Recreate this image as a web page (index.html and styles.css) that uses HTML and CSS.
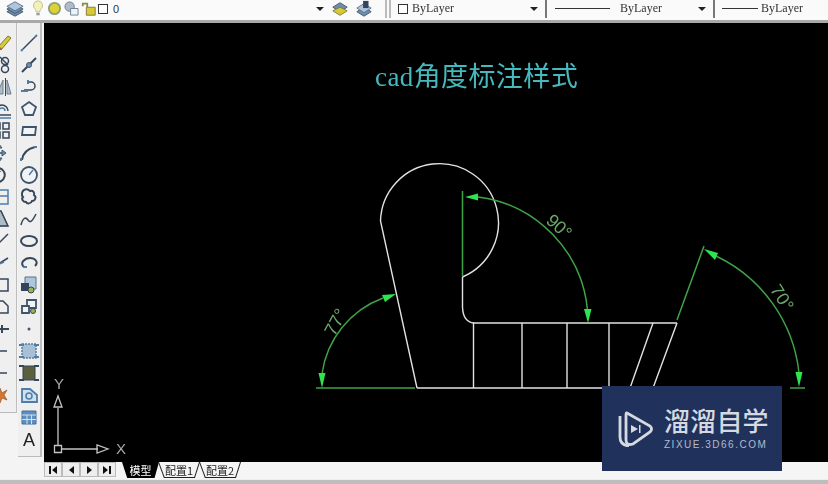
FILE: index.html
```html
<!DOCTYPE html>
<html lang="zh">
<head>
<meta charset="utf-8">
<title>cad角度标注样式</title>
<link rel="stylesheet" href="styles.css">
</head>
<body>
<div class="app">
  <header class="topbar">
    <svg class="tool layers" viewBox="0 0 24 20"><path class="fb" d="M3 13l9 5 9-5-9-5z"/><path class="fb" d="M3 10l9 5 9-5-9-5z"/><path class="fl" d="M3 7l9 5 9-5-9-5z"/></svg>
    <svg class="tool bulb" viewBox="0 0 14 20"><path class="bulbp" d="M7 1a5.500 5.500 0 0 0-3 10l1 3h4l1-3a5.500 5.500 0 0 0-3-10z"/><path class="bulbb" d="M5 15h4v3H5z"/></svg>
    <svg class="tool sun" viewBox="0 0 16 16"><circle class="sunp" cx="8" cy="8" r="6"/></svg>
    <svg class="tool frz" viewBox="0 0 16 16"><circle class="fg" cx="6" cy="6" r="5"/><path class="fw" d="M7 8h8v7H7z"/></svg>
    <svg class="tool lock" viewBox="0 0 18 18"><path class="lk" d="M2 6V3h5v4"/><path class="ly" d="M6 7h10v9H6z"/></svg>
    <span class="swatch"></span>
    <span class="layername">0</span>
    <span class="caret first"></span>
    <svg class="tool lay2" viewBox="0 0 22 20"><path class="fb" d="M3 8l8-5 8 5-8 5z"/><path class="ly" d="M3 12l8-4 8 4-8 5z"/></svg>
    <svg class="tool lay3" viewBox="0 0 22 20"><path class="fb" d="M3 13l8 5 8-5-8-5z"/><path class="fl" d="M3 9l8 5 8-5-8-5z"/><path class="fd" d="M10 1h6v8h-6z"/></svg>
    <span class="grip"></span>
    <span class="swatch second"></span>
    <span class="bylayer one">ByLayer</span>
    <span class="caret c2"></span>
    <span class="sep s1"></span>
    <span class="stroke long"></span>
    <span class="bylayer">ByLayer</span>
    <span class="caret c3"></span>
    <span class="sep s2"></span>
    <span class="stroke short"></span>
    <span class="bylayer">ByLayer</span>
  </header>

  <aside class="side">
    <div class="col narrow">
      <svg class="ic" viewBox="0 0 22 22"><path class="ly" d="M4 15L14 4l3 2L7 18z"/><path class="red" d="M2 19l3-5 3 3z"/></svg>
      <svg class="ic" viewBox="0 0 22 22"><circle class="s" cx="11" cy="7" r="3.500"/><circle class="s" cx="11" cy="15" r="3.500"/><path class="s" d="M6 3l8 8"/></svg>
      <svg class="ic" viewBox="0 0 22 22"><path class="fg" d="M9 4v14H3z"/><path class="fd" d="M11 2v18h1V2z"/><path class="fg" d="M13 4v14h4z"/></svg>
      <svg class="ic" viewBox="0 0 22 22"><path class="s" d="M2 13a6 6 0 0 1 12 0"/><path class="s" d="M0 17h17"/><path class="sb" d="M0 20h17M5 13a3 3 0 0 1 6 0"/></svg>
      <svg class="ic" viewBox="0 0 22 22"><path class="s" d="M0 3h6v6H0zM9 3h6v6H9zM0 12h6v6H0zM9 12h6v6H9z"/></svg>
      <svg class="ic" viewBox="0 0 22 22"><path class="sb thick" d="M5 4v14M-1 11h12"/><path class="fb" d="M5 2l3 4H2zM5 20l3-4H2zM12 11l-4 3V8z"/></svg>
      <svg class="ic" viewBox="0 0 22 22"><path class="s thick" d="M4 4a7 7 0 1 1-6 3"/><path class="fd" d="M2 1v7h5z"/></svg>
      <svg class="ic" viewBox="0 0 22 22"><path class="sb" d="M-2 4h16v14H-2z"/><path class="sb" d="M4 18v-8h10"/></svg>
      <svg class="ic" viewBox="0 0 22 22"><path class="fg" d="M2 3h5l7 15H-4z"/><path class="s" d="M2 3l-6 15h18L7 3z"/></svg>
      <svg class="ic" viewBox="0 0 22 22"><path class="s" d="M-3 13h8l9-9"/><path class="s" d="M2 9v7"/></svg>
      <svg class="ic" viewBox="0 0 22 22"><path class="s" d="M-2 16L14 6"/><path class="sb" d="M5 12l5-2"/></svg>
      <svg class="ic" viewBox="0 0 22 22"><path class="s" d="M-3 5h17v12H-3z"/></svg>
      <svg class="ic" viewBox="0 0 22 22"><path class="s" d="M-3 5h12l5 5v7H-3z"/></svg>
      <svg class="ic" viewBox="0 0 22 22"><path class="s thick" d="M-3 11h18M3 7v8M8 7v8"/></svg>
      <svg class="ic" viewBox="0 0 22 22"><path class="s" d="M-2 14l4-3h11"/><path class="sb" d="M2 16l1-5"/></svg>
      <svg class="ic" viewBox="0 0 22 22"><path class="s" d="M-2 16q2-5 6-5h9"/></svg>
      <svg class="ic" viewBox="0 0 22 22"><path class="org" d="M6 4l2 5 5-3-3 5 3 5-5-2-2 5-2-5-4-1 3-4z"/></svg>
    </div>
    <div class="col wide">
      <svg class="ic" viewBox="0 0 22 22"><path class="s" d="M5 17L17 5"/><path class="sb thick" d="M3 19l2-2M17 5l2-2"/></svg>
      <svg class="ic" viewBox="0 0 22 22"><path class="s thick" d="M4 18L18 4"/><circle class="fb" cx="11" cy="11" r="2.500"/></svg>
      <svg class="ic" viewBox="0 0 22 22"><path class="s" d="M9 6h4a4 4 0 0 1 0 8H6"/><path class="sb thick" d="M3 15h7M10 4v4"/></svg>
      <svg class="ic" viewBox="0 0 22 22"><path class="pent" d="M11 4l7 5-3 8H7L4 9z"/></svg>
      <svg class="ic" viewBox="0 0 22 22"><path class="pent" d="M5 7h13l-1 8H4z"/></svg>
      <svg class="ic" viewBox="0 0 22 22"><path class="s thick" d="M4 18q1-10 13-13"/><path class="sb thick" d="M3 19v-3M16 5h3"/></svg>
      <svg class="ic" viewBox="0 0 22 22"><circle class="pent" cx="11" cy="11" r="8"/><path class="sb" d="M11 11l4-5"/></svg>
      <svg class="ic" viewBox="0 0 22 22"><path class="s thick" d="M6 4c3-2 5 0 6 1 3-1 5 2 4 4 3 2 1 6-2 6-1 3-5 3-6 1-3 0-5-3-3-5-2-2-1-6 1-7z"/></svg>
      <svg class="ic" viewBox="0 0 22 22"><path class="s" d="M3 17c2-8 5-8 7-5s4 2 8-6"/></svg>
      <svg class="ic" viewBox="0 0 22 22"><ellipse class="s thick" cx="11" cy="11" rx="8" ry="5"/></svg>
      <svg class="ic" viewBox="0 0 22 22"><path class="s thick" d="M6 15C1 11 7 6 12 6s9 4 5 8"/><path class="sb thick" d="M5 15h4"/></svg>
      <svg class="ic" viewBox="0 0 22 22"><path class="fl" d="M7 3h11v12H7z"/><path class="fd" d="M3 9h8v8H3z"/><circle class="fgn" cx="13" cy="16" r="3"/></svg>
      <svg class="ic" viewBox="0 0 22 22"><path class="pent" d="M9 4h9v8H9z"/><path class="pent" d="M4 10h7v7H4z"/><circle class="fgn" cx="15" cy="15" r="2.500"/></svg>
      <svg class="ic" viewBox="0 0 22 22"><circle class="dot" cx="11" cy="11" r="1.500"/></svg>
      <svg class="ic" viewBox="0 0 22 22"><path class="hatch" d="M4 4h14v14H4z"/><path class="sb thick" d="M1 5h5M16 5h5M1 17h5M16 17h5"/></svg>
      <svg class="ic" viewBox="0 0 22 22"><path class="grad" d="M5 4h12v14H5z"/><path class="s thick" d="M1 4h5M16 4h5M1 18h5M16 18h5"/></svg>
      <svg class="ic" viewBox="0 0 22 22"><path class="region" d="M4 5h8l7 6v7H4z"/><circle class="sb" cx="11" cy="12" r="3"/></svg>
      <svg class="ic" viewBox="0 0 22 22"><path class="table" d="M4 5h14v13H4z"/><path class="tl" d="M4 9h14M4 13.500h14M9 9v9M13.500 9v9"/></svg>
      <span class="ic letter">A</span>
    </div>
  </aside>

  <main class="canvas">
    <svg class="drawing" viewBox="44 23 784 439">
      <text class="title" x="375" y="86">cad角度标注样式</text>
      <g class="white">
        <path d="M462.500 277A59 59 0 1 0 380.500 221L417 388"/>
        <path d="M462.500 277V307Q463 322 474 323"/>
        <path d="M473 323H677M417 388H610"/>
        <path d="M473.500 323V388M522 323V388M567 323V388M609 323V388"/>
        <path d="M653 323L630 388M677 323L653 388"/>
      </g>
      <g class="green">
        <path d="M316 388H415M462.500 191V276M790 388H805M677 320L704 246"/>
        <path d="M478 197A126 126 0 0 1 587.500 310"/>
        <path d="M322 374A95 95 0 0 1 383 298"/>
        <path d="M716 256A147 147 0 0 1 799 373"/>
      </g>
      <g class="arrow">
        <path d="M465 197L478 193.500V200.500z"/>
        <path d="M588 323L584 309H591.500z"/>
        <path d="M322 388L318.500 373H325.500z"/>
        <path d="M396 294L382 295L385 302z"/>
        <path d="M704 249L718 253L715 260z"/>
        <path d="M799 387L795.500 372H802.500z"/>
      </g>
      <text class="dim" transform="translate(555 231) rotate(42)" text-anchor="middle">90°</text>
      <text class="dim" transform="translate(777 301) rotate(57)" text-anchor="middle">70°</text>
      <text class="dim" transform="translate(341 325) rotate(-62)" text-anchor="middle">77°</text>
      <g class="ucs">
        <path d="M54.500 445.500h7v7h-7zM58 445V408M62 449H98"/>
        <path d="M58 396l4 11h-8zM108 449l-11 4v-8z"/>
      </g>
      <text class="axis" x="59" y="389" text-anchor="middle">Y</text>
      <text class="axis" x="121" y="454" text-anchor="middle">X</text>
    </svg>
  </main>

  <nav class="tabsbar">
    <div class="navs">
      <span class="nav"><i class="bar"></i><i class="tl-arrow"></i></span>
      <span class="nav"><i class="tl-arrow"></i></span>
      <span class="nav"><i class="tr-arrow"></i></span>
      <span class="nav"><i class="tr-arrow"></i><i class="bar"></i></span>
    </div>
    <span class="tab active">模型</span>
    <span class="tab">配置1</span>
    <span class="tab">配置2</span>
  </nav>
  <div class="status"></div>

  <aside class="mark">
    <svg class="marklogo" viewBox="0 0 36 36">
      <path d="M3 5V26Q3 34 12 35"/>
      <path d="M10 2L33 15Q36 18 33 21L16 33Q9 35 9 29V5Q9 1 10 2z"/>
      <path class="solid" d="M14 14l7 4-7 4z"/>
      <path class="solid" d="M22 14h1.500v8H22z"/>
    </svg>
    <div class="marktext">
      <span class="markcn">溜溜自学</span>
      <span class="marken">ZIXUE.3D66.COM</span>
    </div>
  </aside>
</div>
</body>
</html>
```
FILE: styles.css
```css
* { box-sizing: border-box; }
html, body { margin: 0; padding: 0; }
body { width: 828px; height: 484px; overflow: hidden; background: #f3f3f3; font-family: "Liberation Sans", sans-serif; }

.app {
  position: relative;
  width: 828px;
  height: 484px;
  display: grid;
  grid-template-columns: 44px 1fr;
  grid-template-rows: 23px 439px 17px 5px;
  overflow: hidden;
}

/* top toolbar */
.topbar {
  grid-column: 1 / 3;
  display: flex;
  align-items: center;
  height: 23px;
  padding-bottom: 3px;
  background: #fafafa;
  border-bottom: 3px solid #a9a9a9;
  color: #333;
  font-family: "Liberation Serif", serif;
  font-size: 12px;
  filter: blur(.5px);
}
.tool { flex: none; display: block; }
.layers { width: 22px; height: 18px; margin-left: 4px; }
.bulb { width: 12px; height: 17px; margin-left: 6px; }
.sun { width: 15px; height: 15px; margin-left: 3px; }
.frz { width: 15px; height: 15px; margin-left: 2px; }
.lock { width: 16px; height: 16px; margin-left: 2px; }
.swatch { flex: none; width: 10px; height: 10px; border: 1.500px solid #333; background: #fff; margin-left: 1px; }
.layername { margin-left: 5px; width: 203px; font-family: "Liberation Sans", sans-serif; font-size: 11px; }
.caret { flex: none; width: 0; height: 0; border: 4px solid transparent; border-top: 4px solid #222; border-bottom: 0; }
.caret.first { margin-left: 0; }
.lay2 { width: 20px; height: 18px; margin-left: 6px; }
.lay3 { width: 20px; height: 18px; margin-left: 4px; }
.grip { flex: none; width: 6px; height: 19px; margin-left: 11px; border-left: 2px solid #bbb; border-right: 2px solid #bbb; }
.swatch.second { margin-left: 7px; }
.bylayer { flex: none; width: 42px; font-size: 12px; }
.bylayer.one { margin-left: 4px; }
.c2 { margin-left: 76px; }
.sep { flex: none; width: 2px; height: 19px; background: #777; }
.s1 { margin-left: 7px; }
.stroke { flex: none; height: 1px; background: #333; }
.long { width: 55px; margin: 0 10px 0 8px; }
.c3 { margin-left: 36px; }
.s2 { margin-left: 7px; }
.short { width: 36px; margin: 0 3px 0 7px; }

/* svg tool paints */
.fb { fill: #6e8eb0; stroke: #44566b; stroke-width: 1; }
.fl { fill: #aec6dc; stroke: #5b7188; stroke-width: 1; }
.fd { fill: #33455c; }
.fg { fill: #aebcc8; stroke: #6d8091; stroke-width: 1; }
.fw { fill: #eef2f5; stroke: #6d8091; stroke-width: 1; }
.ly { fill: #d8c93a; stroke: #7a7a30; stroke-width: 1; }
.lk { fill: none; stroke: #8d8a50; stroke-width: 2; }
.bulbp { fill: #f4f1b6; stroke: #b9b98a; stroke-width: 1; }
.bulbb { fill: #9aa0a0; }
.sunp { fill: #dcd238; stroke: #8fa07a; stroke-width: 2; }

/* left toolbars */
.side {
  display: flex;
  align-items: flex-start;
  gap: 2px;
  overflow: hidden;
  background: #f4f4f4;
  grid-row: 2 / 4;
  filter: blur(.5px);
}
.col {
  flex: none;
  display: flex;
  flex-direction: column;
  align-items: center;
  padding-top: 9px;
  width: 22px;
  background: #efefef;
}
.narrow { margin-left: -6px; height: 390px; border-bottom: 1px solid #bbb; box-shadow: 1px 0 0 #bdbdbd; }
.wide { height: 434px; border-bottom: 1px solid #bbb; box-shadow: 2px 0 0 #bdbdbd; }
.ic { flex: none; display: block; width: 22px; height: 22px; overflow: visible; }
.s { fill: none; stroke: #37475a; stroke-width: 1.500; }
.sb { fill: none; stroke: #4f7ca8; stroke-width: 1.500; }
.thick { stroke-width: 2; }
.red { fill: #a55a3a; }
.org { fill: #d9752c; stroke: #8a5a35; stroke-width: .7; }
.pent { fill: #f1f4f7; stroke: #3f5369; stroke-width: 1.800; }
.fgn { fill: #9bb44f; stroke: #33455c; stroke-width: 1; }
.dot { fill: #45586d; }
.hatch { fill: #a8c0d6; stroke: #5c7c9c; stroke-width: 1.500; stroke-dasharray: 2 1; }
.grad { fill: #5b5f3e; stroke: #33455c; stroke-width: 1; }
.region { fill: #cfe0ef; stroke: #4f7ca8; stroke-width: 1.800; }
.table { fill: #5f8ec0; stroke: #446e9a; stroke-width: 1; }
.tl { fill: none; stroke: #d5e3f0; stroke-width: 1; }
.letter { margin-top: 1px; font-size: 18px; line-height: 22px; text-align: center; color: #222; }

/* canvas */
.canvas { background: #000; overflow: hidden; filter: blur(.5px); }
.drawing { display: block; width: 784px; height: 439px; }
.title { font-family: "Liberation Serif", "Noto Sans CJK SC", serif; font-size: 27px; letter-spacing: .4px; fill: #45b9bd; }
.white path { fill: none; stroke: #e2e2e2; stroke-width: 1.400; }
.green path { fill: none; stroke: #3fa347; stroke-width: 1.500; }
.arrow path { fill: #2fe44e; }
.dim { font-family: "Liberation Sans", sans-serif; font-size: 18px; fill: #6aa86c; }
.ucs path { fill: none; stroke: #c4c4c4; stroke-width: 1.300; }
.axis { font-family: "Liberation Sans", sans-serif; font-size: 15px; fill: #a8a8a8; }

/* layout tabs */
.tabsbar {
  display: flex;
  align-items: stretch;
  height: 17px;
  background: #f5f5f5;
  filter: blur(.5px);
}
.navs { display: flex; width: 72px; height: 15px; margin-right: 6px; }
.nav { flex: 1; display: flex; align-items: center; justify-content: center; gap: 1px; background: #eee; border: 1px solid #bbb; }
.bar { width: 2px; height: 8px; background: #111; }
.tl-arrow { width: 0; height: 0; border: 4px solid transparent; border-right: 5px solid #111; border-left: 0; }
.tr-arrow { width: 0; height: 0; border: 4px solid transparent; border-left: 5px solid #111; border-right: 0; }
.tab {
  position: relative;
  display: flex;
  align-items: center;
  justify-content: center;
  width: 42px;
  height: 16px;
  margin-right: -1px;
  background: #222;
  font-family: "Noto Sans CJK SC", sans-serif;
  font-size: 11px;
  color: #222;
  clip-path: polygon(0 0, 100% 0, 88% 100%, 14% 100%);
  z-index: 0;
}
.tab::before {
  content: "";
  position: absolute;
  inset: 0 1px 1px 1px;
  background: #f5f5f5;
  clip-path: polygon(0 0, 100% 0, 88% 100%, 14% 100%);
  z-index: -1;
}
.tab.active { width: 37px; color: #fff; background: #000; }
.tab.active::before { background: #000; }

.status { grid-column: 1 / 3; background: #bdbdbd; border-top: 1px solid #eee; }

/* watermark */
.mark {
  position: absolute;
  left: 602px;
  top: 386px;
  width: 180px;
  height: 85px;
  display: flex;
  align-items: center;
  gap: 11px;
  padding: 0 0 0 15px;
  background: #20325b;
  color: #d6d9e0;
}
.marklogo { flex: none; width: 36px; height: 36px; fill: none; stroke: #d6d9e0; stroke-width: 2.800; }
.marklogo .solid { fill: #d6d9e0; stroke: none; }
.marktext { display: flex; flex-direction: column; align-items: flex-start; gap: 7px; }
.markcn { display: block; font-family: "Noto Sans CJK SC", sans-serif; font-size: 26px; line-height: 24px; height: 24px; font-weight: 500; letter-spacing: .2px; white-space: nowrap; }
.marken { display: block; font-family: "Liberation Sans", sans-serif; font-size: 10px; line-height: 11px; letter-spacing: 1.500px; color: #b4bac9; white-space: nowrap; }
```
